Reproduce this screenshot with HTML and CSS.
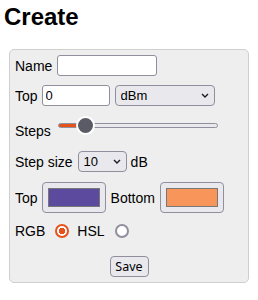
FILE: index.html
```html
<!DOCTYPE html>
<html>
<head>
<meta charset="utf-8">
<link rel="stylesheet" href="styles.css">
</head>
<body>
<h2 class="title">Create</h2>
<form class="panel">
  <div class="row r1">
    <label class="lbl">Name</label>
    <input class="text name-input" type="text">
  </div>
  <div class="row r2">
    <label class="lbl">Top</label>
    <input class="text top-input" type="text" value="0">
    <span class="sel-wrap">
      <select class="sel unit-sel"><option>dBm</option></select>
      <svg class="chev" width="8" height="5" viewBox="0 0 8 5"><path d="M1 1 L4 4 L7 1" fill="none" stroke="#1c1b22" stroke-width="1.4"/></svg>
    </span>
  </div>
  <div class="row r3">
    <label class="lbl">Steps</label>
    <input class="range" type="range" min="0" max="8" value="1">
  </div>
  <div class="row r4">
    <label class="lbl">Step size</label>
    <span class="sel-wrap">
      <select class="sel size-sel"><option>10</option></select>
      <svg class="chev" width="8" height="5" viewBox="0 0 8 5"><path d="M1 1 L4 4 L7 1" fill="none" stroke="#1c1b22" stroke-width="1.4"/></svg>
    </span>
    <span class="lbl">dB</span>
  </div>
  <div class="row r5">
    <label class="lbl">Top</label>
    <button type="button" class="color-btn"><span class="swatch purple"></span></button>
    <label class="lbl">Bottom</label>
    <button type="button" class="color-btn"><span class="swatch orange"></span></button>
  </div>
  <div class="row r6">
    <label class="lbl">RGB</label>
    <span class="radio checked"></span>
    <label class="lbl">HSL</label>
    <span class="radio"></span>
  </div>
  <div class="row r7">
    <button type="button" class="save">Save</button>
  </div>
</form>
</body>
</html>
```
FILE: styles.css
```css
html, body {
  margin: 0;
  padding: 0;
}
body {
  padding: 0 4px;
  font-family: "Liberation Sans", Arial, sans-serif;
  font-size: 14px;
  color: #000;
  background: #fff;
}
.title {
  font-size: 24px;
  font-weight: bold;
  margin: 3px 0 19px;
  line-height: 27px;
}
.panel {
  box-sizing: border-box;
  width: 240px;
  margin: 0 auto;
  border: 1px solid #cfcfcf;
  border-radius: 5px;
  background: #eeeeee;
  padding: 5px 5px 5px 5px;
  display: flex;
  flex-direction: column;
}
.row {
  display: flex;
  align-items: center;
  gap: 4px;
}
.lbl {
  line-height: 16px;
}
.text {
  box-sizing: border-box;
  height: 21px;
  border: 1px solid #8f8f9d;
  border-radius: 3px;
  background: #fff;
  font-family: "Liberation Sans", Arial, sans-serif;
  font-size: 13px;
  padding: 0 3px;
  margin: 0;
  outline: none;
}
.r1 { gap: 5px; }
.name-input { width: 100px; }
.top-input { width: 68px; }
.r2 { margin-top: 9px; }
.r2 .sel-wrap { margin-left: 1px; }
.sel-wrap {
  position: relative;
  display: inline-block;
  height: 21px;
}
.sel {
  -webkit-appearance: none;
  appearance: none;
  box-sizing: border-box;
  height: 21px;
  border: 1px solid #8f8f9d;
  border-radius: 4px;
  background: #e9e9ed;
  font-family: "Liberation Sans", Arial, sans-serif;
  font-size: 13px;
  color: #000;
  padding: 0 0 0 5px;
  margin: 0;
  outline: none;
  display: block;
}
.unit-sel { width: 100px; }
.size-sel { width: 49px; }
.chev {
  position: absolute;
  right: 6px;
  top: 8px;
  pointer-events: none;
}
.r3 {
  margin-top: 9px;
  align-items: flex-end;
  height: 24px;
  gap: 7px;
}
.range {
  -webkit-appearance: none;
  appearance: none;
  width: 160px;
  height: 20px;
  margin: 0 0 4px 0;
  background: transparent;
}
.range::-webkit-slider-runnable-track {
  height: 5px;
  border-radius: 3px;
  box-sizing: border-box;
  border: 1px solid #8f8f9d;
  background: linear-gradient(to right, #e4531c 0 27px, #e9e9ed 27px);
}
.range::-webkit-slider-thumb {
  -webkit-appearance: none;
  appearance: none;
  box-sizing: border-box;
  width: 19px;
  height: 19px;
  border-radius: 50%;
  background: #5b5b66;
  border: 2px solid #fff;
  margin-top: -8px;
}
.r4 { margin-top: 12px; gap: 5px; }
.r4 .lbl:last-child { margin-left: -1px; }
.r5 { margin-top: 10px; gap: 4px; }
.r5 .color-btn + .lbl { margin-left: 1px; }
.r5 .lbl + .color-btn + .lbl + .color-btn { margin-left: 1px; }
.color-btn {
  box-sizing: border-box;
  width: 64px;
  height: 31px;
  border: 1px solid #8f8f9d;
  border-radius: 4px;
  background: #e9e9ed;
  padding: 0;
  margin: 0;
  display: flex;
  align-items: center;
  justify-content: center;
}
.swatch {
  box-sizing: border-box;
  display: block;
  width: 52px;
  height: 19px;
  border: 1px solid #777;
}
.purple { background: #5b4a9e; }
.orange { background: #f7955a; }
.r6 { margin-top: 9px; gap: 0; height: 18px; }
.radio {
  box-sizing: border-box;
  width: 14px;
  height: 14px;
  border-radius: 50%;
  border: 2px solid #8f8f9d;
  background: #fff;
  margin: 0 8px 0 10px;
}
.radio.checked {
  border: 2px solid #e4531c;
  background: radial-gradient(circle, #e4531c 0 3px, #fff 3.5px);
}
.r7 {
  margin-top: 16px;
  justify-content: center;
}
.save {
  box-sizing: border-box;
  height: 21px;
  width: 39px;
  border: 1px solid #8f8f9d;
  border-radius: 4px;
  background: #e9e9ed;
  font-family: "Noto Sans", "Liberation Sans", sans-serif;
  font-size: 12.5px;
  color: #000;
  padding: 0;
  margin: 0;
}
```
